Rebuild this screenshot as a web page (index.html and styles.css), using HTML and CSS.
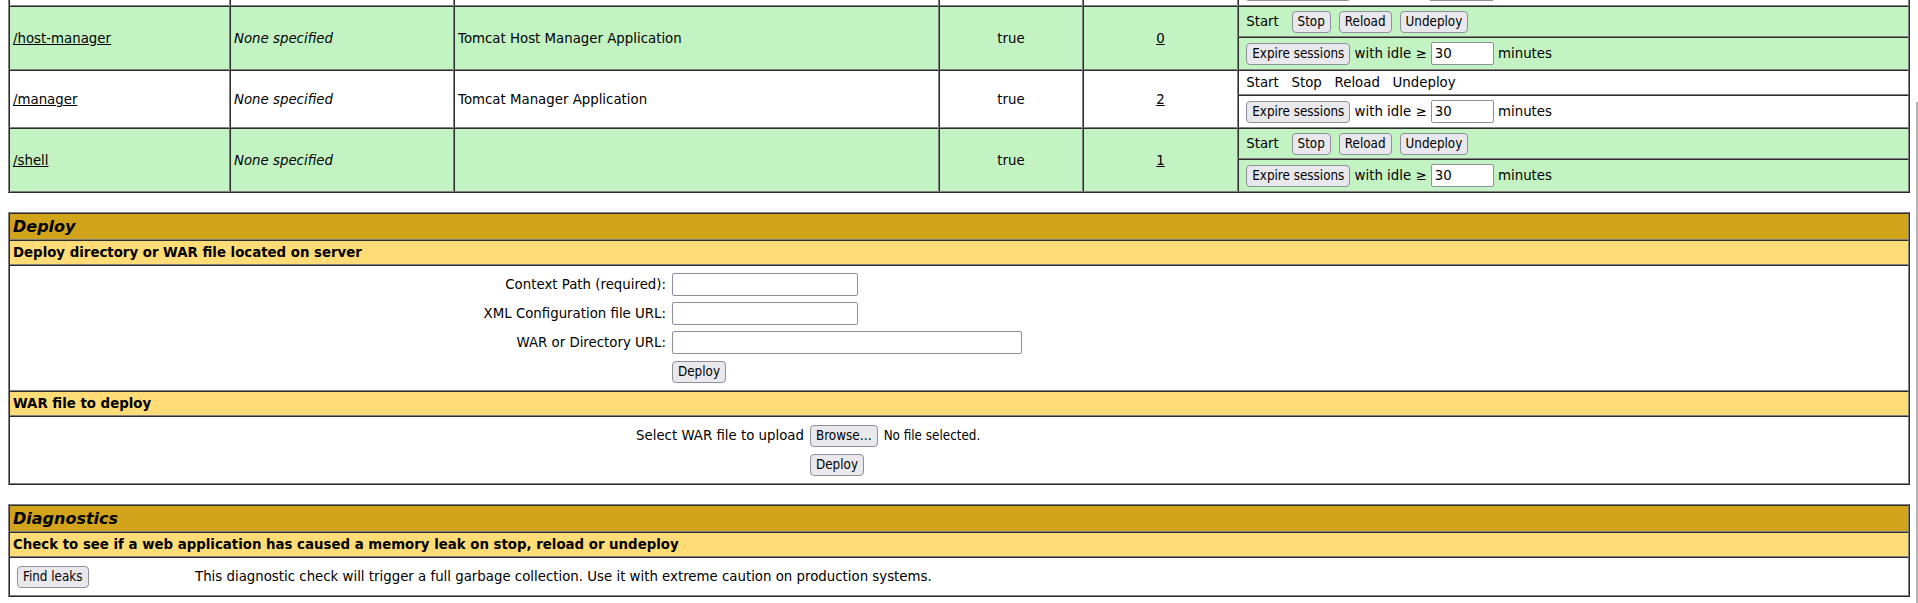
FILE: index.html
```html
<!DOCTYPE html>
<html lang="en">
<head>
<meta charset="utf-8">
<title>/manager</title>
<link rel="stylesheet" href="styles.css">
</head>
<body>
<table class="apps">
  <colgroup>
    <col class="c-path"><col class="c-ver"><col class="c-name"><col class="c-run"><col class="c-sess"><col class="c-cmd">
  </colgroup>
  <tr class="row-white tail">
    <td><div class="tail-box"></div></td>
    <td><div class="tail-box"></div></td>
    <td><div class="tail-box"></div></td>
    <td><div class="tail-box"></div></td>
    <td><div class="tail-box"></div></td>
    <td><div class="tail-box tail-cmd"><span class="stub-btn"></span><span class="stub-input"></span></div></td>
  </tr>

  <tr class="row-green">
    <td rowspan="2" class="info"><a href="#">/host-manager</a></td>
    <td rowspan="2" class="info none">None specified</td>
    <td rowspan="2" class="info">Tomcat Host Manager Application</td>
    <td rowspan="2" class="info center">true</td>
    <td rowspan="2" class="info center"><a href="#">0</a></td>
    <td class="cmd"><div class="cmd-line btn-line"><span>&nbsp;Start&nbsp;&nbsp;&nbsp;</span><button class="btn">Stop</button><button class="btn">Reload</button><button class="btn">Undeploy</button></div></td>
  </tr>
  <tr class="row-green">
    <td class="cmd"><div class="cmd-line expire-line"><span>&nbsp;</span><button class="btn">Expire sessions</button><span>&nbsp;with idle&nbsp;&ge;&nbsp;</span><input class="idle" type="text" value="30"><span>&nbsp;minutes</span></div></td>
  </tr>

  <tr class="row-white">
    <td rowspan="2" class="info"><a href="#">/manager</a></td>
    <td rowspan="2" class="info none">None specified</td>
    <td rowspan="2" class="info">Tomcat Manager Application</td>
    <td rowspan="2" class="info center">true</td>
    <td rowspan="2" class="info center"><a href="#">2</a></td>
    <td class="cmd"><div class="cmd-line text-line"><span>&nbsp;Start&nbsp;&nbsp;&nbsp;Stop&nbsp;&nbsp;&nbsp;Reload&nbsp;&nbsp;&nbsp;Undeploy&nbsp;</span></div></td>
  </tr>
  <tr class="row-white">
    <td class="cmd"><div class="cmd-line expire-line"><span>&nbsp;</span><button class="btn">Expire sessions</button><span>&nbsp;with idle&nbsp;&ge;&nbsp;</span><input class="idle" type="text" value="30"><span>&nbsp;minutes</span></div></td>
  </tr>

  <tr class="row-green">
    <td rowspan="2" class="info"><a href="#">/shell</a></td>
    <td rowspan="2" class="info none">None specified</td>
    <td rowspan="2" class="info"></td>
    <td rowspan="2" class="info center">true</td>
    <td rowspan="2" class="info center"><a href="#">1</a></td>
    <td class="cmd"><div class="cmd-line btn-line"><span>&nbsp;Start&nbsp;&nbsp;&nbsp;</span><button class="btn">Stop</button><button class="btn">Reload</button><button class="btn">Undeploy</button></div></td>
  </tr>
  <tr class="row-green">
    <td class="cmd"><div class="cmd-line expire-line"><span>&nbsp;</span><button class="btn">Expire sessions</button><span>&nbsp;with idle&nbsp;&ge;&nbsp;</span><input class="idle" type="text" value="30"><span>&nbsp;minutes</span></div></td>
  </tr>
</table>

<table class="section">
  <tr><td class="title">Deploy</td></tr>
  <tr><td class="header">Deploy directory or WAR file located on server</td></tr>
  <tr>
    <td class="body">
      <form class="form-grid server-form">
        <label class="lbl">Context Path (required):</label>
        <input class="field short" type="text">
        <label class="lbl">XML Configuration file URL:</label>
        <input class="field short" type="text">
        <label class="lbl">WAR or Directory URL:</label>
        <input class="field long" type="text">
        <span></span>
        <div class="cell"><button class="btn" type="button">Deploy</button></div>
      </form>
    </td>
  </tr>
  <tr><td class="header">WAR file to deploy</td></tr>
  <tr>
    <td class="body">
      <form class="form-grid upload-form">
        <label class="lbl">Select WAR file to upload</label>
        <div class="cell file"><button class="btn" type="button">Browse…</button><span class="nofile">No file selected.</span></div>
        <span></span>
        <div class="cell"><button class="btn" type="button">Deploy</button></div>
      </form>
    </td>
  </tr>
</table>

<table class="section">
  <tr><td class="title">Diagnostics</td></tr>
  <tr><td class="header">Check to see if a web application has caused a memory leak on stop, reload or undeploy</td></tr>
  <tr>
    <td class="body">
      <form class="diag-form">
        <div class="cell"><button class="btn" type="button">Find leaks</button></div>
        <div class="diag-text">This diagnostic check will trigger a full garbage collection. Use it with extreme caution on production systems.</div>
      </form>
    </td>
  </tr>
</table>

<div class="scroll-thumb"></div>
</body>
</html>
```
FILE: styles.css
```css
html, body {
  background: #ffffff;
}

body {
  margin: 0 8px 8px;
  font-family: "DejaVu Sans", sans-serif;
  font-size: 16px;
  color: #000;
  overflow: hidden;
}

table {
  width: 100%;
  border-collapse: separate;
  border-spacing: 0;
  border: 1px outset #808080;
}

td {
  border: 1px inset #808080;
  padding: 3px;
  vertical-align: middle;
  text-align: left;
  font-size: 13.333px;
  line-height: 16px;
}

a {
  color: #000;
  text-decoration: underline;
}

/* ---------- application list (scrolled: top border out of view) ---------- */
.apps {
  table-layout: fixed;
  border-top: 0;
}

.c-path { width: 221px; }
.c-ver  { width: 224px; }
.c-name { width: 485px; }
.c-run  { width: 144px; }
.c-sess { width: 155px; }
.c-cmd  { width: 671px; }

.row-green td { background: #c3f3c3; }
.row-white td { background: #ffffff; }

.tail td {
  border-top: 0;
  padding: 0 3px;
  vertical-align: top;
}

.tail-box { height: 5px; }

.tail-cmd {
  display: flex;
  align-items: flex-start;
}

.stub-btn {
  width: 102px;
  height: 1px;
  margin-left: 5px;
  background: #8f8f9d;
  border-radius: 0 0 3px 3px;
}

.stub-input {
  width: 63px;
  height: 1px;
  margin-left: 81px;
  background: #8f8f9d;
}

td.info {
  padding: 4px 3px 2px;
}

.none { font-style: italic; }
.center { text-align: center; }

.cmd-line {
  display: flex;
  align-items: center;
  white-space: pre;
}

.btn-line { height: 23px; }
.text-line { height: 17px; }
.expire-line { height: 25px; }

.btn-line .btn + .btn { margin-left: 8px; }

/* ---------- controls ---------- */
.btn {
  box-sizing: border-box;
  height: 22px;
  margin: 0;
  padding: 0 5px;
  border: 1px solid #8f8f9d;
  border-radius: 4px;
  background: #e9e9ed;
  color: #000;
  font-family: "DejaVu Sans Condensed", "DejaVu Sans", sans-serif;
  font-stretch: condensed;
  font-size: 13.333px;
  line-height: 18px;
  white-space: nowrap;
}

.idle,
.field {
  box-sizing: border-box;
  height: 23px;
  margin: 0;
  padding: 0 3px;
  border: 1px solid #8f8f9d;
  border-radius: 2px;
  background: #fff;
  color: #000;
  font-family: "DejaVu Sans", sans-serif;
  font-size: 13.333px;
}

.idle { width: 63px; }
.field.short { width: 186px; }
.field.long { width: 350px; }

/* ---------- sections ---------- */
.section { margin-top: 19px; }

.section td.title {
  background: #d2a41c;
  font-size: 16px;
  line-height: 19px;
  font-weight: bold;
  font-style: italic;
}

.section td.header {
  background: #ffdc75;
  font-weight: bold;
  line-height: 17px;
}

.section td.body {
  background: #fff;
}

.form-grid {
  display: grid;
  grid-auto-rows: 23px;
  row-gap: 6px;
  column-gap: 6px;
  align-items: center;
  margin: 0;
  padding: 4px 0;
}

.server-form { grid-template-columns: 653px 1fr; }
.upload-form { grid-template-columns: 791px 1fr; }

.lbl {
  text-align: right;
  white-space: nowrap;
}

.cell {
  display: flex;
  align-items: center;
  height: 23px;
}

.nofile {
  margin-left: 6px;
  font-family: "DejaVu Sans Condensed", "DejaVu Sans", sans-serif;
  font-stretch: condensed;
  font-size: 13.333px;
}

.diag-form {
  display: grid;
  grid-template-columns: 178px 1fr;
  align-items: center;
  margin: 0;
  padding: 4px 0 4px 1px;
}

.diag-form .cell { padding-left: 3px; }
.diag-text { padding-left: 3px; }

/* overlay scrollbar indicator */
.scroll-thumb {
  position: fixed;
  top: 102px;
  right: 0;
  bottom: 0;
  width: 2px;
  background: #b4b4b4;
}
```
